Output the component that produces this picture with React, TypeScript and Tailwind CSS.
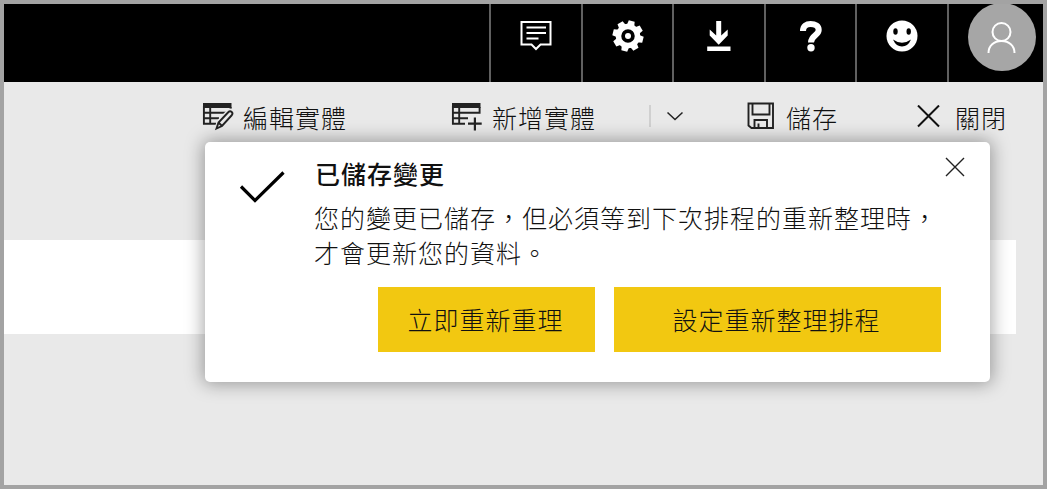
import React from 'react';

const FONT = "font-['Noto_Sans_CJK_TC',sans-serif]";

function HeaderCell({ wide = false, children }: { wide?: boolean; children: React.ReactNode }) {
  return (
    <div className={`flex h-full shrink-0 justify-center border-l-2 border-[#606060] pt-4 ${wide ? 'w-[92px]' : 'w-[91px]'}`}>
      {children}
    </div>
  );
}

const teeth = [14, 59, 104, 149, 194, 239, 284, 329];

function Header() {
  return (
    <header className="flex h-[78px] shrink-0 justify-end overflow-hidden bg-black text-white">
      <HeaderCell wide>
        <svg width="32" height="32" viewBox="0 0 32 32" fill="none" stroke="currentColor">
          <path d="M1.500 2H30.500V24.500H20.500L16 29L11.500 24.500H1.500Z" strokeWidth="2" />
          <path d="M6.500 7.500H26M6.500 13H26M6.500 18.500H18.500" strokeWidth="2" />
        </svg>
      </HeaderCell>
      <HeaderCell>
        <svg width="32" height="32" viewBox="-16 -16 32 32" fill="currentColor">
          <circle r="9.500" fill="none" stroke="currentColor" strokeWidth="5.500" />
          {teeth.map((a) => (
            <path key={a} d="M-3.900 -10L-3 -15.400H3L3.900 -10Z" transform={`rotate(${a})`} />
          ))}
          <circle r="3" />
        </svg>
      </HeaderCell>
      <HeaderCell wide>
        <svg width="32" height="32" viewBox="0 0 32 32" fill="currentColor">
          <path d="M13.200 1H18.200V15.500L24.700 9.500V15.500L15.700 24.800L6.700 15.500V9.500L13.200 15.500ZM4.200 26.500H27.500V31H4.200Z" />
        </svg>
      </HeaderCell>
      <HeaderCell>
        <svg width="32" height="32" viewBox="0 0 32 32" fill="none" stroke="currentColor">
          <path d="M8 11C8 6 11.500 4 15.500 4C20.500 4 23.700 6 23.700 10C23.700 15.500 16 15.500 16 22.500" strokeWidth="6" />
          <circle cx="16" cy="27.700" r="3.700" fill="currentColor" stroke="none" />
        </svg>
      </HeaderCell>
      <HeaderCell wide>
        <svg width="32" height="32" viewBox="0 0 32 32" fill="currentColor">
          <circle cx="16" cy="16" r="15.500" />
          <ellipse cx="9.500" cy="11.500" rx="2.200" ry="3.200" fill="black" />
          <ellipse cx="22.700" cy="11.500" rx="2.200" ry="3.200" fill="black" />
          <path d="M7 19.500Q16 26 25 19.500Q22 26.500 16 26.500Q10 26.500 7 19.500Z" fill="black" />
        </svg>
      </HeaderCell>
      <div className="flex h-full w-[96px] shrink-0 border-l-2 border-[#606060] pl-[19px]">
        <div className="-mt-px flex size-[68px] items-center justify-center rounded-full bg-[#a6a6a6]">
          <svg width="30" height="32" viewBox="0 0 30 32" fill="none" stroke="currentColor" strokeWidth="2">
            <circle cx="14.500" cy="11" r="9" />
            <path d="M1.500 32C1.500 24.500 7 20 14.500 20S27.500 24.500 27.500 32" />
          </svg>
        </div>
      </div>
    </header>
  );
}

function TableIcon({ children }: { children: React.ReactNode }) {
  return (
    <svg className="ml-px mt-[20px] shrink-0" width="32" height="30" viewBox="0 0 32 30" fill="none" stroke="#222" strokeWidth="1.900">
      <path d="M1 1H29.500V6H1Z" fill="#222" stroke="none" />
      <path d="M1.900 4V22.500M8.200 5V22M1 10.700H28.600V5M1 16.200H17M1 21.700H14" />
      {children}
    </svg>
  );
}

function Toolbar() {
  return (
    <div className="flex h-[60px] shrink-0 items-start pl-[197px] text-[25px] leading-[38px] tracking-[1px] text-[#111]">
      <div className="flex w-[249px]">
        <TableIcon>
          <path d="M15 27L17 20L27 9.500Q29 8.500 30 10Q31 11.500 30 13L20 24.500Z" stroke="#e9e9e9" strokeWidth="5" />
          <path d="M14.500 26.500L16.500 20.500L26 10.500Q28 8.500 29.700 10Q31.300 11.500 29.500 13.500L20 24ZM16.500 20.500L20 24" />
        </TableIcon>
        <span className="ml-[9px] mt-[16px]">編輯實體</span>
      </div>
      <div className="flex w-[199px]">
        <TableIcon>
          <path d="M16 22H31M23.700 14.500V29" stroke="#e9e9e9" strokeWidth="5" />
          <path d="M17 21.700H30.700M23.900 15.500V28.500" strokeWidth="2.200" />
        </TableIcon>
        <span className="ml-[9px] mt-[16px]">新增實體</span>
      </div>
      <div className="mt-[23px] flex h-[22px] w-[94px] border-l-2 border-[#d0d0d0]">
        <svg className="ml-[15px] mt-[6px]" width="18" height="12" viewBox="0 0 18 12" fill="none" stroke="#222" strokeWidth="1.500">
          <path d="M1.500 1.500L9 8.500L16.500 1.500" />
        </svg>
      </div>
      <div className="flex w-[172px]">
        <svg className="ml-[4px] mt-[20px]" width="28" height="28" viewBox="0 0 28 28" fill="none" stroke="#222" strokeWidth="1.900">
          <path d="M1.500 1.500H26V26H4.500L1.500 23.500ZM5.500 2V12.500H22.500V2M7.500 26V18H20V26M11.500 21.500V26" />
        </svg>
        <span className="ml-[11px] mt-[16px]">儲存</span>
      </div>
      <svg className="ml-[2px] mt-[23px]" width="24" height="24" viewBox="0 0 24 24" stroke="#111" strokeWidth="2">
        <path d="M1 .500L22 21.500M22 .500L1 21.500" />
      </svg>
      <span className="ml-[14px] mt-[16px]">關閉</span>
    </div>
  );
}

function Notice() {
  return (
    <section className="absolute left-[201px] top-[138px] flex h-[240px] w-[785px] flex-col rounded-[5px] bg-white text-[25px] tracking-[1px] text-[#111] shadow-[0_0_18px_2px_rgba(0,0,0,0.35)]">
      <div className="flex h-[145px]">
        <svg className="ml-[34px] mt-[28px] shrink-0" width="48" height="36" viewBox="0 0 48 36" fill="none" stroke="black" strokeWidth="3.200">
          <path d="M2 16.500L16 30.500L44.500 2.500" />
        </svg>
        <div className="ml-[27px] flex-1 whitespace-nowrap">
          <h2 className="ml-px mt-[12px] h-[38px] font-medium leading-[38px]">已儲存變更</h2>
          <p className="mt-[8px] leading-[35px]">您的變更已儲存，但必須等到下次排程的重新整理時，<br />才會更新您的資料。</p>
        </div>
        <svg className="absolute right-[25px] top-[15px]" width="20" height="20" viewBox="0 0 20 20" stroke="#222" strokeWidth="1.400">
          <path d="M1 1L19 19M19 1L1 19" />
        </svg>
      </div>
      <div className="flex justify-end gap-[19px] pr-[49px]">
        <button className="h-[65px] w-[217px] bg-[#f2c811] pr-[2px] tracking-[1px]">立即重新重理</button>
        <button className="h-[65px] w-[327px] bg-[#f2c811] pr-[2px] tracking-[1px]">設定重新整理排程</button>
      </div>
    </section>
  );
}

export default function App() {
  return (
    <div className={`${FONT} relative flex h-[489px] w-[1047px] flex-col overflow-hidden border-4 border-[#a3a3a3] bg-[#e9e9e9] font-light`}>
      <Header />
      <Toolbar />
      <div className="mr-[27px] mt-[98px] h-[94px] shrink-0 bg-white" />
      <Notice />
    </div>
  );
}
